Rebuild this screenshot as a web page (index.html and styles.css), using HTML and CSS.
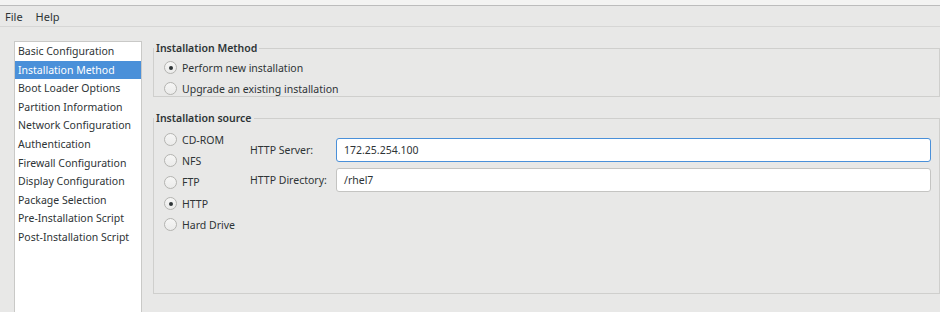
FILE: index.html
```html
<!DOCTYPE html>
<html lang="en">
<head>
    <meta charset="UTF-8">
    <title>Kickstart Configurator</title>
    <link rel="stylesheet" href="styles.css">
</head>
<body>
    <div class="titlebar"></div>

    <div class="menubar">
        <span class="menu-item">File</span>
        <span class="menu-item">Help</span>
    </div>

    <div class="main">
        <!-- lista de seções -->
        <ul class="sidebar">
            <li>Basic Configuration</li>
            <li class="selected">Installation Method</li>
            <li>Boot Loader Options</li>
            <li>Partition Information</li>
            <li>Network Configuration</li>
            <li>Authentication</li>
            <li>Firewall Configuration</li>
            <li>Display Configuration</li>
            <li>Package Selection</li>
            <li>Pre-Installation Script</li>
            <li>Post-Installation Script</li>
        </ul>

        <div class="content">
            <fieldset class="frame frame-method">
                <legend>Installation Method</legend>
                <div class="frame-body method-body">
                    <label class="radio"><span class="dot checked"></span>Perform new installation</label>
                    <label class="radio"><span class="dot"></span>Upgrade an existing installation</label>
                </div>
            </fieldset>

            <fieldset class="frame frame-source">
                <legend>Installation source</legend>
                <div class="frame-body source-body">
                    <div class="source-list">
                        <label class="radio"><span class="dot"></span>CD-ROM</label>
                        <label class="radio"><span class="dot"></span>NFS</label>
                        <label class="radio"><span class="dot"></span>FTP</label>
                        <label class="radio"><span class="dot checked"></span>HTTP</label>
                        <label class="radio"><span class="dot"></span>Hard Drive</label>
                    </div>
                    <div class="source-form">
                        <span class="field-label">HTTP Server:</span>
                        <div class="entry focused">172.25.254.100</div>
                        <span class="field-label">HTTP Directory:</span>
                        <div class="entry">/rhel7</div>
                    </div>
                </div>
            </fieldset>
        </div>
    </div>
</body>
</html>
```

FILE: styles.css
```css
body {
    margin: 0;
    height: 100vh;
    overflow: hidden;
    background-color: #e8e8e7;
    font-family: 'Noto Sans', 'DejaVu Sans', sans-serif;
    font-size: 10.5px;
    color: #2e3436;
}

.titlebar {
    height: 5px;
    background-color: #f3f3f2;
    border-bottom: 1px solid #bcbcbc;
}

.menubar {
    display: flex;
    height: 20px;
    align-items: center;
    padding-left: 5px;
    gap: 13px;
    font-size: 11px;
    border-bottom: 1px solid #d6d6d5;
}

.main {
    display: flex;
    height: calc(100vh - 27px);
    padding: 14px 0 0 14px;
    box-sizing: border-box;
    gap: 11px;
}

.sidebar {
    list-style: none;
    margin: 0;
    padding: 0;
    width: 126px;
    background-color: white;
    border: 1px solid #c9c9c7;
    border-bottom: none;
    flex-shrink: 0;
}

.sidebar li {
    height: 18.6px;
    line-height: 18.6px;
    padding-left: 3px;
    white-space: nowrap;
}

.sidebar li.selected {
    background-color: #4a90d9;
    color: white;
}

.content {
    flex: 1;
    display: flex;
    flex-direction: column;
    gap: 14px;
    padding-bottom: 18px;
}

.frame {
    margin: 0;
    padding: 0;
    border: 1px solid #cfcfcd;
    min-width: 0;
}

.frame legend {
    padding: 0 2px;
    font-weight: 600;
    line-height: 14px;
}

.frame-body {
    padding: 2px 8px 0 10px;
}

.method-body {
    margin-bottom: -3px;
}

.frame-source {
    flex: 1;
}

.radio {
    display: flex;
    align-items: center;
    height: 21px;
}

.dot {
    width: 11px;
    height: 11px;
    border: 1px solid #b4b4b1;
    border-radius: 50%;
    background: linear-gradient(#f6f6f5, #ebebea);
    margin-right: 5px;
    position: relative;
    flex-shrink: 0;
}

.dot.checked::after {
    content: '';
    position: absolute;
    left: 3.5px;
    top: 3.5px;
    width: 4px;
    height: 4px;
    border-radius: 50%;
    background-color: #2e3436;
}

.source-body {
    display: flex;
    padding-top: 4px;
}

.source-list .radio {
    height: 21.3px;
}

.source-list {
    width: 86px;
    flex-shrink: 0;
}

.source-form {
    flex: 1;
    display: grid;
    grid-template-columns: 86px 1fr;
    grid-auto-rows: 24px;
    row-gap: 6px;
    align-items: center;
    margin-top: 9px;
}

.entry {
    height: 24px;
    box-sizing: border-box;
    border: 1px solid #c4c4c2;
    border-radius: 3px;
    background-color: white;
    padding-left: 7px;
    line-height: 22px;
}

.entry.focused {
    border-color: #4a90d9;
}
```
